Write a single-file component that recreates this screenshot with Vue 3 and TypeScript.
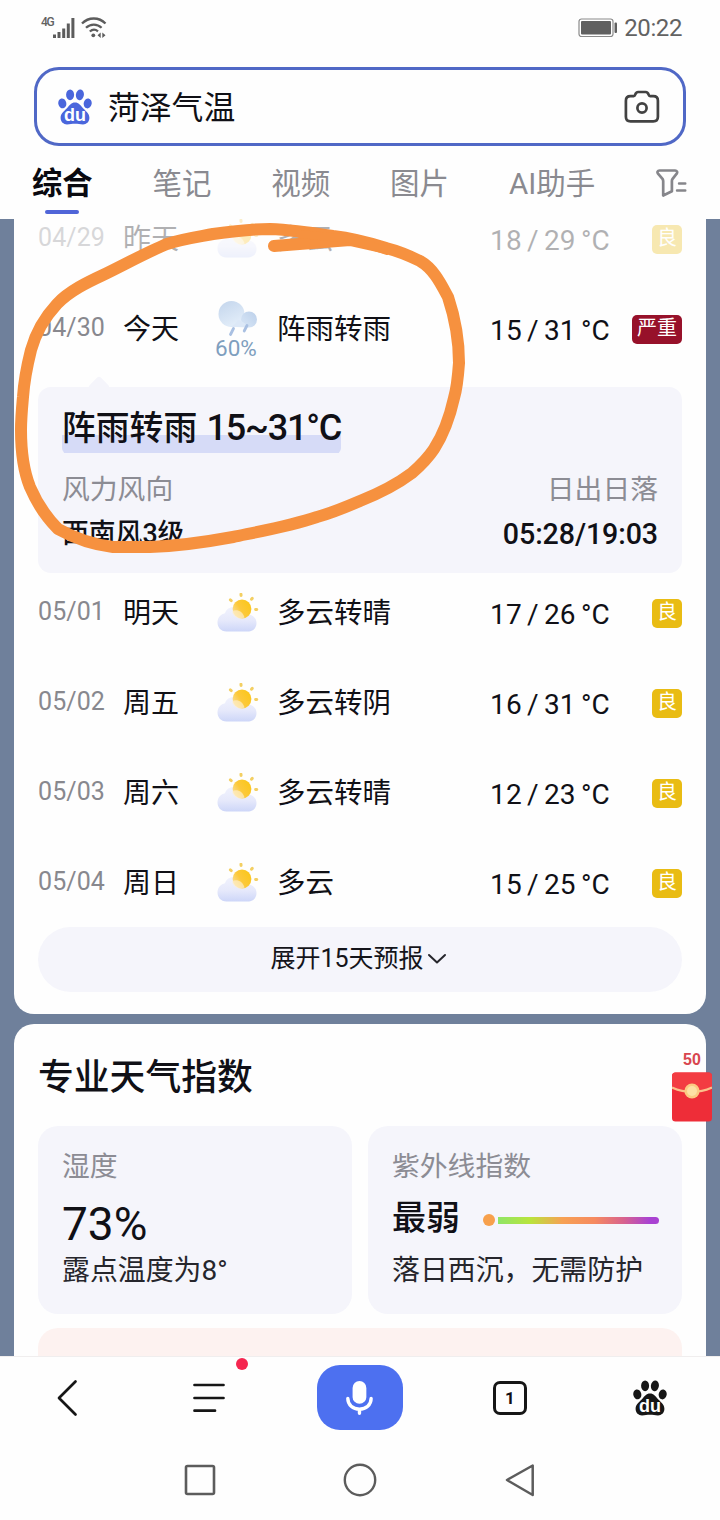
<script setup lang="ts">
interface DayForecast {
  date: string
  day: string
  icon: 'cloud-sun' | 'rain'
  rain?: string
  text: string
  low: number
  high: number
  air: string
  level: 'good' | 'severe'
  past?: boolean
}

const tabs: string[] = ['综合', '笔记', '视频', '图片', 'AI助手']

const before: DayForecast[] = [
  { date: '04/29', day: '昨天', icon: 'cloud-sun', text: '多云', low: 18, high: 29, air: '良', level: 'good', past: true },
  { date: '04/30', day: '今天', icon: 'rain', rain: '60%', text: '阵雨转雨', low: 15, high: 31, air: '严重', level: 'severe' },
]

const after: DayForecast[] = [
  { date: '05/01', day: '明天', icon: 'cloud-sun', text: '多云转晴', low: 17, high: 26, air: '良', level: 'good' },
  { date: '05/02', day: '周五', icon: 'cloud-sun', text: '多云转阴', low: 16, high: 31, air: '良', level: 'good' },
  { date: '05/03', day: '周六', icon: 'cloud-sun', text: '多云转晴', low: 12, high: 23, air: '良', level: 'good' },
  { date: '05/04', day: '周日', icon: 'cloud-sun', text: '多云', low: 15, high: 25, air: '良', level: 'good' },
]

const groups: { key: string; rows: DayForecast[] }[] = [
  { key: 'before', rows: before },
  { key: 'after', rows: after },
]

const rays: number[] = [-62, -14, 34, 82]
</script>

<template>
  <div class="screen">
    <svg class="defs" width="0" height="0" aria-hidden="true">
      <defs>
        <linearGradient id="cloudFill" x1="0" y1="0" x2="0" y2="1">
          <stop offset="0" stop-color="#eef0fd" stop-opacity="0.85" />
          <stop offset="0.55" stop-color="#e6e9fb" />
          <stop offset="1" stop-color="#cdd6f8" />
        </linearGradient>
        <linearGradient id="sunFill" x1="1" y1="0.2" x2="0" y2="0.8">
          <stop offset="0" stop-color="#fbc618" />
          <stop offset="0.55" stop-color="#fcc93a" />
          <stop offset="1" stop-color="#fbdf9a" />
        </linearGradient>
        <linearGradient id="rainFill" x1="0" y1="0" x2="0.5" y2="1">
          <stop offset="0" stop-color="#c3d5ec" />
          <stop offset="1" stop-color="#e2edf9" />
        </linearGradient>
        <linearGradient id="rainSmall" x1="1" y1="0" x2="0" y2="1">
          <stop offset="0" stop-color="#bcd0ea" />
          <stop offset="1" stop-color="#d9e7f7" />
        </linearGradient>
        <symbol id="paw" viewBox="0 0 34 36">
          <ellipse cx="4.3" cy="14.4" rx="4" ry="5" transform="rotate(-12 4.3 14.4)" />
          <ellipse cx="12.1" cy="5.8" rx="4" ry="5.4" />
          <ellipse cx="21.9" cy="5.8" rx="4" ry="5.4" transform="rotate(8 21.9 5.8)" />
          <ellipse cx="29.7" cy="14.4" rx="4" ry="5" transform="rotate(10 29.7 14.4)" />
          <path d="M17 13.600c3.800 0 5.400 2.600 7.600 5.200 2.400 2.800 6.800 5.200 6.800 10 0 4.200-2.900 6.600-6.400 6.600-3 0-5-0.700-8-0.700s-5 0.700-8 0.700c-3.500 0-6.400-2.400-6.400-6.600 0-4.800 4.400-7.200 6.800-10 2.200-2.600 3.800-5.200 7.600-5.200z" />
        </symbol>
      </defs>
    </svg>

    <header class="top">
      <div class="status">
        <div class="status-left">
          <span class="net">4G</span>
          <svg class="signal" width="22" height="21" viewBox="0 0 22 21">
            <path d="M1.500 17.500V21M6 15V21M10.700 11.500V21M15.300 6.500V21M19.900 1V21" stroke="#5c5c5c" stroke-width="3" fill="none" />
          </svg>
          <svg class="wifi" width="26" height="21" viewBox="0 0 26 21" fill="none" stroke="#5c5c5c" stroke-width="2.300">
            <path d="M1 6.500C7.500-0.200 18-0.200 24.500 6.500" />
            <path d="M5 10.800c4.400-4.300 11.200-4.300 15.600 0" />
            <path d="M8.800 14.500c2.600-2.400 5.600-2.400 8.200-0.200" />
            <circle cx="12.300" cy="18.300" r="1.900" fill="#5c5c5c" stroke="none" />
            <path d="M19.700 15.400v5.600l-3.200-2.800zM21.300 15.400v5.600l3.200-2.800z" fill="#5c5c5c" stroke="none" />
          </svg>
        </div>
        <div class="status-right">
          <svg width="40" height="20" viewBox="0 0 40 20">
            <rect x="1" y="1" width="34" height="17.500" rx="2.500" fill="#fff" stroke="#8a8a8a" stroke-width="1.200" />
            <rect x="3" y="3" width="30" height="13.500" rx="1" fill="#606060" />
            <rect x="36.500" y="4.500" width="2.500" height="10.500" rx="1" fill="#606060" />
          </svg>
          <span class="clock">20:22</span>
        </div>
      </div>

      <div class="search">
        <svg class="logo" width="34" height="36" viewBox="0 0 34 36">
          <use href="#paw" fill="#4a66dc" />
          <text x="17" y="32.300" text-anchor="middle" class="du">du</text>
        </svg>
        <span class="query">菏泽气温</span>
        <svg class="camera" width="36" height="34" viewBox="0 0 36 34" fill="none" stroke="#424242" stroke-width="2.700" stroke-linejoin="round">
          <path d="M6.500 6.200h3.200c1 0 1.200-.5 1.500-1.500.5-1.800 1.300-2.700 3-2.700h7.400c1.700 0 2.500.9 3 2.700.3 1 .5 1.500 1.500 1.500h3.200c3 0 4.600 1.600 4.600 4.600v16c0 3-1.600 4.600-4.600 4.600H6.500c-3 0-4.600-1.600-4.600-4.600v-16c0-3 1.600-4.600 4.600-4.600z" />
          <circle cx="18" cy="18" r="4.600" />
        </svg>
      </div>

      <nav class="tabs">
        <span v-for="(tab, i) in tabs" :key="tab" class="tab" :class="{ active: i === 0 }">{{ tab }}</span>
        <svg class="filter" width="31" height="30" viewBox="0 0 31 30" fill="none" stroke="#86868b" stroke-width="2.700" stroke-linejoin="round" stroke-linecap="round">
          <path d="M3.500 2.500h15.600c1.900 0 2.600 1.700 1.600 3.100l-4.100 5.300c-.5.700-.7 1.200-.7 2v10.300L7.200 27.500V13c0-.8-.2-1.400-.7-2.100L2 5.600C.9 4.200 1.600 2.500 3.500 2.500z" />
          <path d="M23 15.500h6.300M21 22.500h8.300" stroke-width="2.400" />
        </svg>
      </nav>
    </header>

    <main class="content">
      <section class="card forecast">
        <template v-for="group in groups" :key="group.key">
          <div class="rows">
            <div v-for="row in group.rows" :key="row.date" class="row" :class="{ past: row.past }">
              <span class="date">{{ row.date }}</span>
              <span class="day">{{ row.day }}</span>
              <div class="weather">
                <svg v-if="row.icon === 'cloud-sun'" width="44" height="40" viewBox="0 0 44 40">
                  <g transform="translate(26 16)" stroke-linecap="round">
                    <line v-for="r in rays" :key="r" x1="0" y1="-13.600" x2="0" y2="-14.800" :transform="`rotate(${r + 10})`" stroke="#f3cf62" stroke-width="3" />
                  </g>
                  <path d="M10.500 38.500C4.500 38.500 1.500 34 1.500 29.500 1.500 24.500 5 21 9 20.300 10.500 15.500 14.500 13.500 19 14c4.500.5 7.500 3 8.800 7 6.500-.5 12.700 2.500 12.700 9 0 5.500-4 8.500-9 8.500z" fill="url(#cloudFill)" />
                  <circle cx="26" cy="16" r="9.400" fill="url(#sunFill)" />
                  <path d="M16 18.500c4-2.500 10.500-1 12.500 6-4.500 2.500-11 .5-12.500-6z" fill="#fdf0cf" opacity="0.650" />
                </svg>
                <template v-else>
                  <svg class="rain" width="44" height="38" viewBox="0 0 44 38">
                    <circle cx="15.500" cy="14" r="13" fill="url(#rainFill)" />
                    <circle cx="33" cy="19.500" r="8" fill="url(#rainSmall)" />
                    <path d="M13 26.800c4-.3 6-3 9-7 3 1 8 4 11 7.700z" fill="#dce8f7" />
                    <path d="M17.500 28.500l-3 6M31 25.500l-2.800 5.500" stroke="#a9c0e2" stroke-width="2.800" stroke-linecap="round" />
                  </svg>
                  <span class="chance">{{ row.rain }}</span>
                </template>
              </div>
              <span class="text">{{ row.text }}</span>
              <span class="temp">{{ row.low }} / {{ row.high }} °C</span>
              <span class="air" :class="row.level">{{ row.air }}</span>
            </div>
          </div>

          <div v-if="group.key === 'before'" class="detail">
            <div class="headline"><span>阵雨转雨 </span><span class="range">15~31°C</span></div>
            <div class="pair labels"><span>风力风向</span><span>日出日落</span></div>
            <div class="pair values"><span>西南风3级</span><span class="suntime">05:28/19:03</span></div>
          </div>
        </template>

        <button class="more" type="button">
          <span>展开15天预报</span>
          <svg width="20" height="12" viewBox="0 0 20 12" fill="none" stroke="#26262c" stroke-width="2" stroke-linecap="round" stroke-linejoin="round">
            <path d="M2 2l8 7.500L18 2" />
          </svg>
        </button>
      </section>

      <section class="card indices">
        <h2>专业天气指数</h2>
        <div class="tiles">
          <div class="tile">
            <div class="label">湿度</div>
            <div class="big">73%</div>
            <div class="note">露点温度为8°</div>
          </div>
          <div class="tile">
            <div class="label">紫外线指数</div>
            <div class="uv">
              <span>最弱</span>
              <i class="dot"></i>
              <i class="bar"></i>
            </div>
            <div class="note">落日西沉，无需防护</div>
          </div>
        </div>
        <div class="banner"></div>
      </section>
    </main>

    <footer class="bottom">
      <div class="toolbar">
        <div class="cell">
          <svg width="24" height="38" viewBox="0 0 24 38" fill="none" stroke="#161616" stroke-width="2.700" stroke-linecap="round" stroke-linejoin="round">
            <path d="M20.500 2.500L4 19l16.500 16.500" />
          </svg>
        </div>
        <div class="cell menu">
          <svg width="32" height="30" viewBox="0 0 32 30" stroke="#161616" stroke-width="2.700" stroke-linecap="round">
            <path d="M1.500 2h29M1.500 15h29M1.500 27.700h20.500" />
          </svg>
          <i class="red-dot"></i>
        </div>
        <div class="mic">
          <svg width="30" height="36" viewBox="0 0 28 34" fill="none">
            <rect x="7" y="1" width="13" height="21.500" rx="6.500" fill="#fff" />
            <path d="M2.500 17.500c0 6 4.800 10 11 10s11-4 11-10M13.500 27.500v4" stroke="#fff" stroke-width="3.200" stroke-linecap="round" />
          </svg>
        </div>
        <div class="cell"><span class="pages">1</span></div>
        <div class="cell">
          <svg width="34" height="36" viewBox="0 0 34 36">
            <use href="#paw" fill="#161616" />
            <text x="17" y="32.300" text-anchor="middle" class="du">du</text>
          </svg>
        </div>
      </div>
      <div class="system">
        <svg width="34" height="34" viewBox="0 0 34 34"><rect x="3" y="3" width="28" height="28" rx="1.500" fill="none" stroke="#5c5c5c" stroke-width="2.600" /></svg>
        <svg width="34" height="34" viewBox="0 0 34 34"><circle cx="17" cy="17" r="15.200" fill="none" stroke="#5c5c5c" stroke-width="2.400" /></svg>
        <svg width="34" height="34" viewBox="0 0 34 34"><path d="M29.700 2.500v29.500L4 17z" fill="none" stroke="#5c5c5c" stroke-width="2.500" stroke-linejoin="round" /></svg>
      </div>
    </footer>

    <div class="reward">
      <span>50</span>
      <svg width="40" height="50" viewBox="0 0 40 50">
        <rect x="0" y="0.500" width="40" height="49" rx="3.500" fill="#ee2d38" />
        <path d="M0 4a3.500 3.500 0 0 1 3.500-3.500h33A3.500 3.500 0 0 1 40 4v11.500Q20 24.500 0 15.500z" fill="#f33c42" />
        <path d="M0 15.500Q20 24.500 40 15.500" fill="none" stroke="#fbc08a" stroke-width="2.200" />
        <circle cx="20" cy="19" r="7.600" fill="#fbc982" />
        <circle cx="20" cy="19" r="5" fill="#fde0a4" />
      </svg>
    </div>

    <svg class="marker" width="480" height="350" viewBox="0 215 480 350" fill="none" stroke="#f6913f" stroke-linecap="round" stroke-linejoin="round">
      <path stroke-width="12" d="M274 246C300 244 325 242 350 240L386 248C398 251 410 256 420 261C434 269 441 284 448 297C454 315 459 340 459 363C458 377 457 388 454 398C450 416 443 435 434 449C428 458 420 466 412 473C396 485 380 493 360 501C346 507 332 513 317 517C290 526 262 531 233 537C206 542 178 546 150 547H113C96 545 76 539 58 529C46 517 36 501 30 487C24 472 21 450 21 430C21 418 22 408 23 397C24 382 27 366 31 350C36 332 44 318 57 304C69 291 88 282 103 275C122 266 147 252 167 244C182 239 197 237 213 234C233 231 252 229 270 229C292 230 313 233 333 236C350 238 370 243 386 248" />
      <path stroke-width="8" d="M300 234L350 239L387 251" />
    </svg>
  </div>
</template>

<style>
body {
  margin: 0;
  background: #fff;
}
</style>

<style scoped>
.screen {
  position: relative;
  width: 720px;
  height: 1520px;
  overflow: hidden;
  display: flex;
  flex-direction: column;
  background: #fefefe;
  color: #101016;
  font-family: Roboto, 'Noto Sans CJK SC', sans-serif;
}
.screen svg {
  display: block;
  flex: none;
}
.screen svg.defs {
  position: absolute;
}
.top {
  height: 219px;
  flex: none;
  display: flex;
  flex-direction: column;
}
.status {
  height: 67px;
  box-sizing: border-box;
  padding: 0 38px 12px 41px;
  display: flex;
  justify-content: space-between;
  align-items: center;
  color: #626262;
}
.status-left,
.status-right {
  display: flex;
  align-items: center;
}
.net {
  width: 12px;
  font-size: 12px;
  line-height: 12px;
  font-weight: 500;
  letter-spacing: -1.3px;
  margin-bottom: 11px;
}
.wifi {
  margin-left: 6px;
}
.status-right svg {
  margin-left: -1px;
}
.clock {
  margin-left: 6px;
  font-size: 24px;
  line-height: 28px;
  letter-spacing: -0.4px;
}
.search {
  box-sizing: border-box;
  height: 79px;
  margin: 0 34px;
  border: 3px solid #5068c6;
  border-radius: 25px;
  padding: 0 23px 0 21px;
  display: flex;
  align-items: center;
}
.query {
  flex: 1;
  margin-left: 16px;
  margin-top: 2px;
  font-size: 31.8px;
  line-height: 44px;
}
.du {
  font-family: 'Liberation Sans', sans-serif;
  font-size: 18px;
  font-weight: 700;
  fill: #fff;
}
.tabs {
  display: flex;
  justify-content: space-between;
  align-items: center;
  height: 73px;
  margin: 0 33px 0 32px;
}
.tab {
  position: relative;
  font-size: 29.5px;
  line-height: 56px;
  font-weight: 400;
  color: #8a8a90;
  top: 1px;
  margin-left: -1px;
}
.tab.active {
  margin-left: 0;
  font-size: 30.3px;
  font-weight: 700;
  color: #0a0a10;
}
.tab.active::after {
  content: '';
  position: absolute;
  left: 13px;
  bottom: -2px;
  width: 34px;
  height: 4px;
  border-radius: 2px;
  background: #5065d8;
}
.content {
  flex: none;
  height: 1137px;
  overflow: hidden;
  background: #6f809b;
  padding: 0 14px;
}
.card {
  box-sizing: border-box;
  background: #fefefe;
  padding: 0 24px;
}
.forecast {
  margin-top: -20px;
  height: 815px;
  border-radius: 0 0 20px 20px;
}
.rows {
  display: flex;
  flex-direction: column;
  gap: 10px;
}
.row {
  height: 80px;
  display: grid;
  grid-template-columns: 85px 93px 61px 1fr auto 72px;
  align-items: center;
}
.row.past {
  opacity: 0.32;
}
.date {
  font-size: 25px;
  line-height: 30px;
  color: #88888e;
  letter-spacing: 0.1px;
  margin-top: -2px;
}
.day,
.text {
  font-size: 28.5px;
  line-height: 40px;
  margin-top: 1px;
}
.day {
  font-size: 28px;
}
.weather {
  display: flex;
  flex-direction: column;
}
.rain {
  margin-top: 2px;
}
.chance {
  font-size: 22.5px;
  line-height: 26px;
  color: #7f9fbe;
  margin: -3px 0 0 -1px;
}
.temp {
  font-size: 28px;
  line-height: 34px;
  letter-spacing: 0.2px;
  word-spacing: -2px;
  margin-top: 3px;
}
.air {
  justify-self: end;
  box-sizing: border-box;
  min-width: 30px;
  height: 29px;
  margin-top: 1px;
  padding: 0 5px;
  border-radius: 5px;
  font-size: 20px;
  line-height: 27px;
  text-align: center;
  color: #fff;
}
.air.good {
  background: #e9bc13;
}
.air.severe {
  background: #97112a;
}
.detail {
  position: relative;
  box-sizing: border-box;
  height: 186px;
  margin-top: 18px;
  padding: 16px 24px 0;
  border-radius: 13px;
  background: #f5f5fb;
}
.detail::before {
  content: '';
  position: absolute;
  left: 53px;
  top: -8px;
  width: 16px;
  height: 16px;
  transform: rotate(45deg);
  border-radius: 3px;
  background: #f5f5fb;
}
.headline {
  display: inline-block;
  position: relative;
  font-size: 33.8px;
  line-height: 50px;
  font-weight: 500;
  white-space: pre;
  border-radius: 6px;
  background: linear-gradient(#d6dbf7, #d6dbf7) 0 32px / 100% 18px no-repeat;
}
.range {
  font-size: 36px;
  letter-spacing: -1.2px;
  margin-left: 1px;
}
.pair {
  display: flex;
  justify-content: space-between;
  line-height: 46px;
  font-size: 27.8px;
}
.labels {
  color: #8c8c94;
  margin-top: 13px;
}
.values {
  font-weight: 500;
  font-size: 26.8px;
  margin-top: -2px;
}
.suntime {
  font-size: 28.6px;
  letter-spacing: -0.1px;
}
.more {
  width: 100%;
  height: 65px;
  margin-top: 4px;
  padding: 0 3px 1px 0;
  border: 0;
  border-radius: 33px;
  background: #f5f5fb;
  color: #14141a;
  font: 400 25px/34px Roboto, 'Noto Sans CJK SC', sans-serif;
  display: flex;
  align-items: center;
  justify-content: center;
  gap: 3px;
}
.indices {
  margin-top: 10px;
  height: 400px;
  padding-top: 27px;
  border-radius: 20px 20px 0 0;
}
h2 {
  margin: 0;
  font-size: 35.8px;
  line-height: 54px;
  font-weight: 500;
}
.tiles {
  display: grid;
  grid-template-columns: 1fr 1fr;
  gap: 16px;
  margin-top: 21px;
}
.tile {
  box-sizing: border-box;
  height: 188px;
  padding: 21px 24px 0;
  border-radius: 20px;
  background: #f5f5fb;
}
.label {
  font-size: 27.8px;
  line-height: 40px;
  color: #8c8c94;
}
.big {
  font-size: 46px;
  line-height: 60px;
  font-weight: 400;
  margin-top: 7px;
}
.note {
  font-size: 27.9px;
  line-height: 36px;
  margin-top: -1px;
  color: #26262c;
  white-space: nowrap;
}
.uv {
  display: flex;
  align-items: center;
  height: 60px;
  margin-top: 7px;
  font-size: 34px;
  line-height: 60px;
  font-weight: 500;
}
.uv span {
  margin-top: -12px;
}
.dot {
  width: 12px;
  height: 12px;
  margin-left: 23px;
  margin-top: -8px;
  border-radius: 50%;
  background: #f7a04c;
}
.bar {
  flex: 1;
  height: 7px;
  margin-left: 3px;
  margin-top: -7px;
  margin-right: -1px;
  border-radius: 0 4px 4px 0;
  background: linear-gradient(90deg, #8fe567, #b9e43c 20%, #f7a154 40%, #f68a60 60%, #d8628e 78%, #a942d2 94%);
}
.banner {
  height: 100px;
  margin-top: 14px;
  border-radius: 20px;
  background: #fdf2f0;
}
.bottom {
  flex: 1;
  background: #fefefe;
}
.toolbar {
  height: 84px;
  box-sizing: border-box;
  border-top: 1px solid #f0eeee;
  padding: 0 24px 2px 21px;
  display: grid;
  grid-template-columns: 92px 192px 110px 190px 90px;
  align-items: center;
  justify-items: center;
}
.cell {
  position: relative;
}
.red-dot {
  position: absolute;
  left: 43px;
  top: -25px;
  width: 12px;
  height: 12px;
  border-radius: 50%;
  background: #f5264f;
}
.mic {
  width: 86px;
  height: 65px;
  border-radius: 23px;
  background: #4d70f0;
  display: flex;
  align-items: center;
  justify-content: center;
}
.pages {
  display: block;
  width: 28px;
  height: 28px;
  border: 3px solid #161616;
  border-radius: 7px;
  font-size: 17px;
  line-height: 28px;
  font-weight: 700;
  text-align: center;
}
.system {
  height: 80px;
  display: flex;
  justify-content: center;
  align-items: center;
  gap: 126px;
}
.reward {
  position: absolute;
  left: 672px;
  top: 1050px;
  width: 40px;
  display: flex;
  flex-direction: column;
  align-items: center;
}
.reward span {
  font: 700 16px/20px 'Liberation Sans', sans-serif;
  color: #d8464f;
  margin-bottom: 2px;
}
.marker {
  position: absolute;
  left: 0;
  top: 215px;
}
</style>
